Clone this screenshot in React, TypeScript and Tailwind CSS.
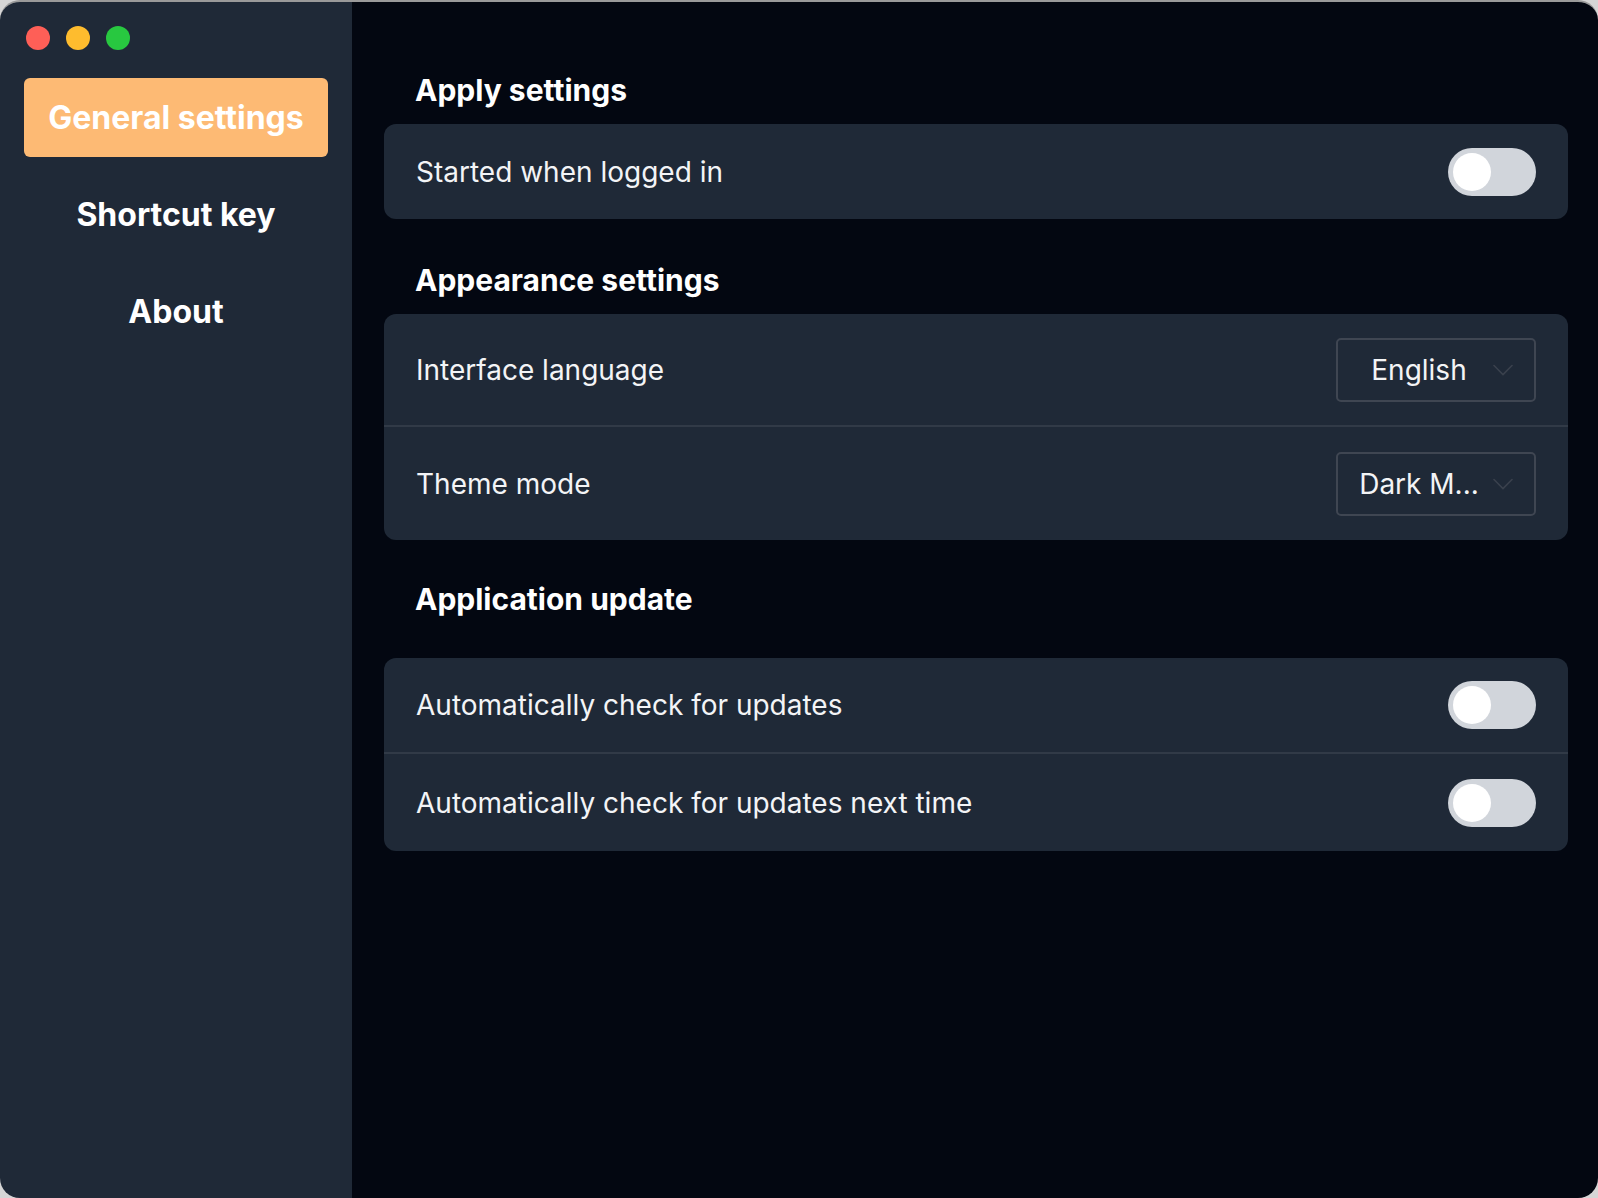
import React, { useState } from "react";

const NAV = ["General settings", "Shortcut key", "About"];

function Toggle({ on, onChange }: { on: boolean; onChange: (v: boolean) => void }) {
  return (
    <button
      type="button"
      onClick={() => onChange(!on)}
      className={`relative h-[48px] w-[88px] shrink-0 rounded-full transition-colors ${on ? "bg-[#fdba74]" : "bg-[#d1d5db]"}`}
    >
      <span
        className={`absolute top-[5px] h-[38px] w-[38px] rounded-full bg-white transition-all ${on ? "left-[45px]" : "left-[5px]"}`}
      />
    </button>
  );
}

function Select({ value }: { value: string }) {
  return (
    <div className="flex h-[64px] w-[200px] shrink-0 items-center rounded-[5px] border-2 border-[#3f4652] pl-[20px]">
      <span className="w-[122px] whitespace-nowrap text-center text-[28px] text-[#f3f4f6]">{value}</span>
      <svg className="ml-[13px]" width="20" height="12" viewBox="0 0 20 12" fill="none" stroke="#3a414d" strokeWidth="1.6" strokeLinecap="round">
        <path d="M1 1.5l9 9 9-9" />
      </svg>
    </div>
  );
}

function Row({ label, children, h }: { label: string; children: React.ReactNode; h: string }) {
  return (
    <div className={`flex items-center justify-between px-8 ${h}`}>
      <span className="text-[28px] text-[#f3f4f6]">{label}</span>
      {children}
    </div>
  );
}

export default function App() {
  const [active, setActive] = useState(0);
  const [autoStart, setAutoStart] = useState(false);
  const [autoCheck, setAutoCheck] = useState(false);
  const [autoNext, setAutoNext] = useState(false);

  return (
    <div className="h-[1198px] w-[1598px] bg-[#d6d6d6]" style={{ fontFamily: "Inter, 'Noto Sans', sans-serif" }}>
      <div className="flex h-full w-full overflow-hidden rounded-[20px] border-t-2 border-[#9a9a9a]">
        {/* sidebar */}
        <aside className="flex w-[352px] shrink-0 flex-col bg-[#1f2937] px-6">
          <div className="flex gap-4 pl-[2px] pt-[24px]">
            <span className="h-[24px] w-[24px] rounded-full bg-[#fe5f57]" />
            <span className="h-[24px] w-[24px] rounded-full bg-[#febc2e]" />
            <span className="h-[24px] w-[24px] rounded-full bg-[#28c840]" />
          </div>
          <nav className="mt-[28px] flex flex-col gap-[18px]">
            {NAV.map((item, i) => (
              <button
                key={item}
                onClick={() => setActive(i)}
                className={`h-[79px] rounded-[6px] text-[32px] font-bold text-white ${active === i ? "bg-[#fdba74]" : ""}`}
              >
                {item}
              </button>
            ))}
          </nav>
        </aside>

        {/* content */}
        <main className="flex-1 bg-[#030711] pl-8 pr-[30px] pt-[70px]">
          <h2 className="pl-[31px] text-[30px] leading-[36px] font-bold text-white">Apply settings</h2>
          <div className="mt-4 rounded-xl bg-[#1f2937]">
            <Row label="Started when logged in" h="h-[95px]">
              <Toggle on={autoStart} onChange={setAutoStart} />
            </Row>
          </div>

          <h2 className="mt-[43px] pl-[31px] text-[30px] leading-[36px] font-bold text-white">Appearance settings</h2>
          <div className="mt-4 divide-y-2 divide-[#313a47] rounded-xl bg-[#1f2937]">
            <Row label="Interface language" h="h-[113px]">
              <Select value="English" />
            </Row>
            <Row label="Theme mode" h="h-[113px]">
              <Select value="Dark M..." />
            </Row>
          </div>

          <h2 className="mt-[41px] pl-[31px] text-[30px] leading-[36px] font-bold text-white">Application update</h2>
          <div className="mt-[41px] divide-y-2 divide-[#313a47] rounded-xl bg-[#1f2937]">
            <Row label="Automatically check for updates" h="h-[96px]">
              <Toggle on={autoCheck} onChange={setAutoCheck} />
            </Row>
            <Row label="Automatically check for updates next time" h="h-[97px]">
              <Toggle on={autoNext} onChange={setAutoNext} />
            </Row>
          </div>
        </main>
      </div>
    </div>
  );
}
